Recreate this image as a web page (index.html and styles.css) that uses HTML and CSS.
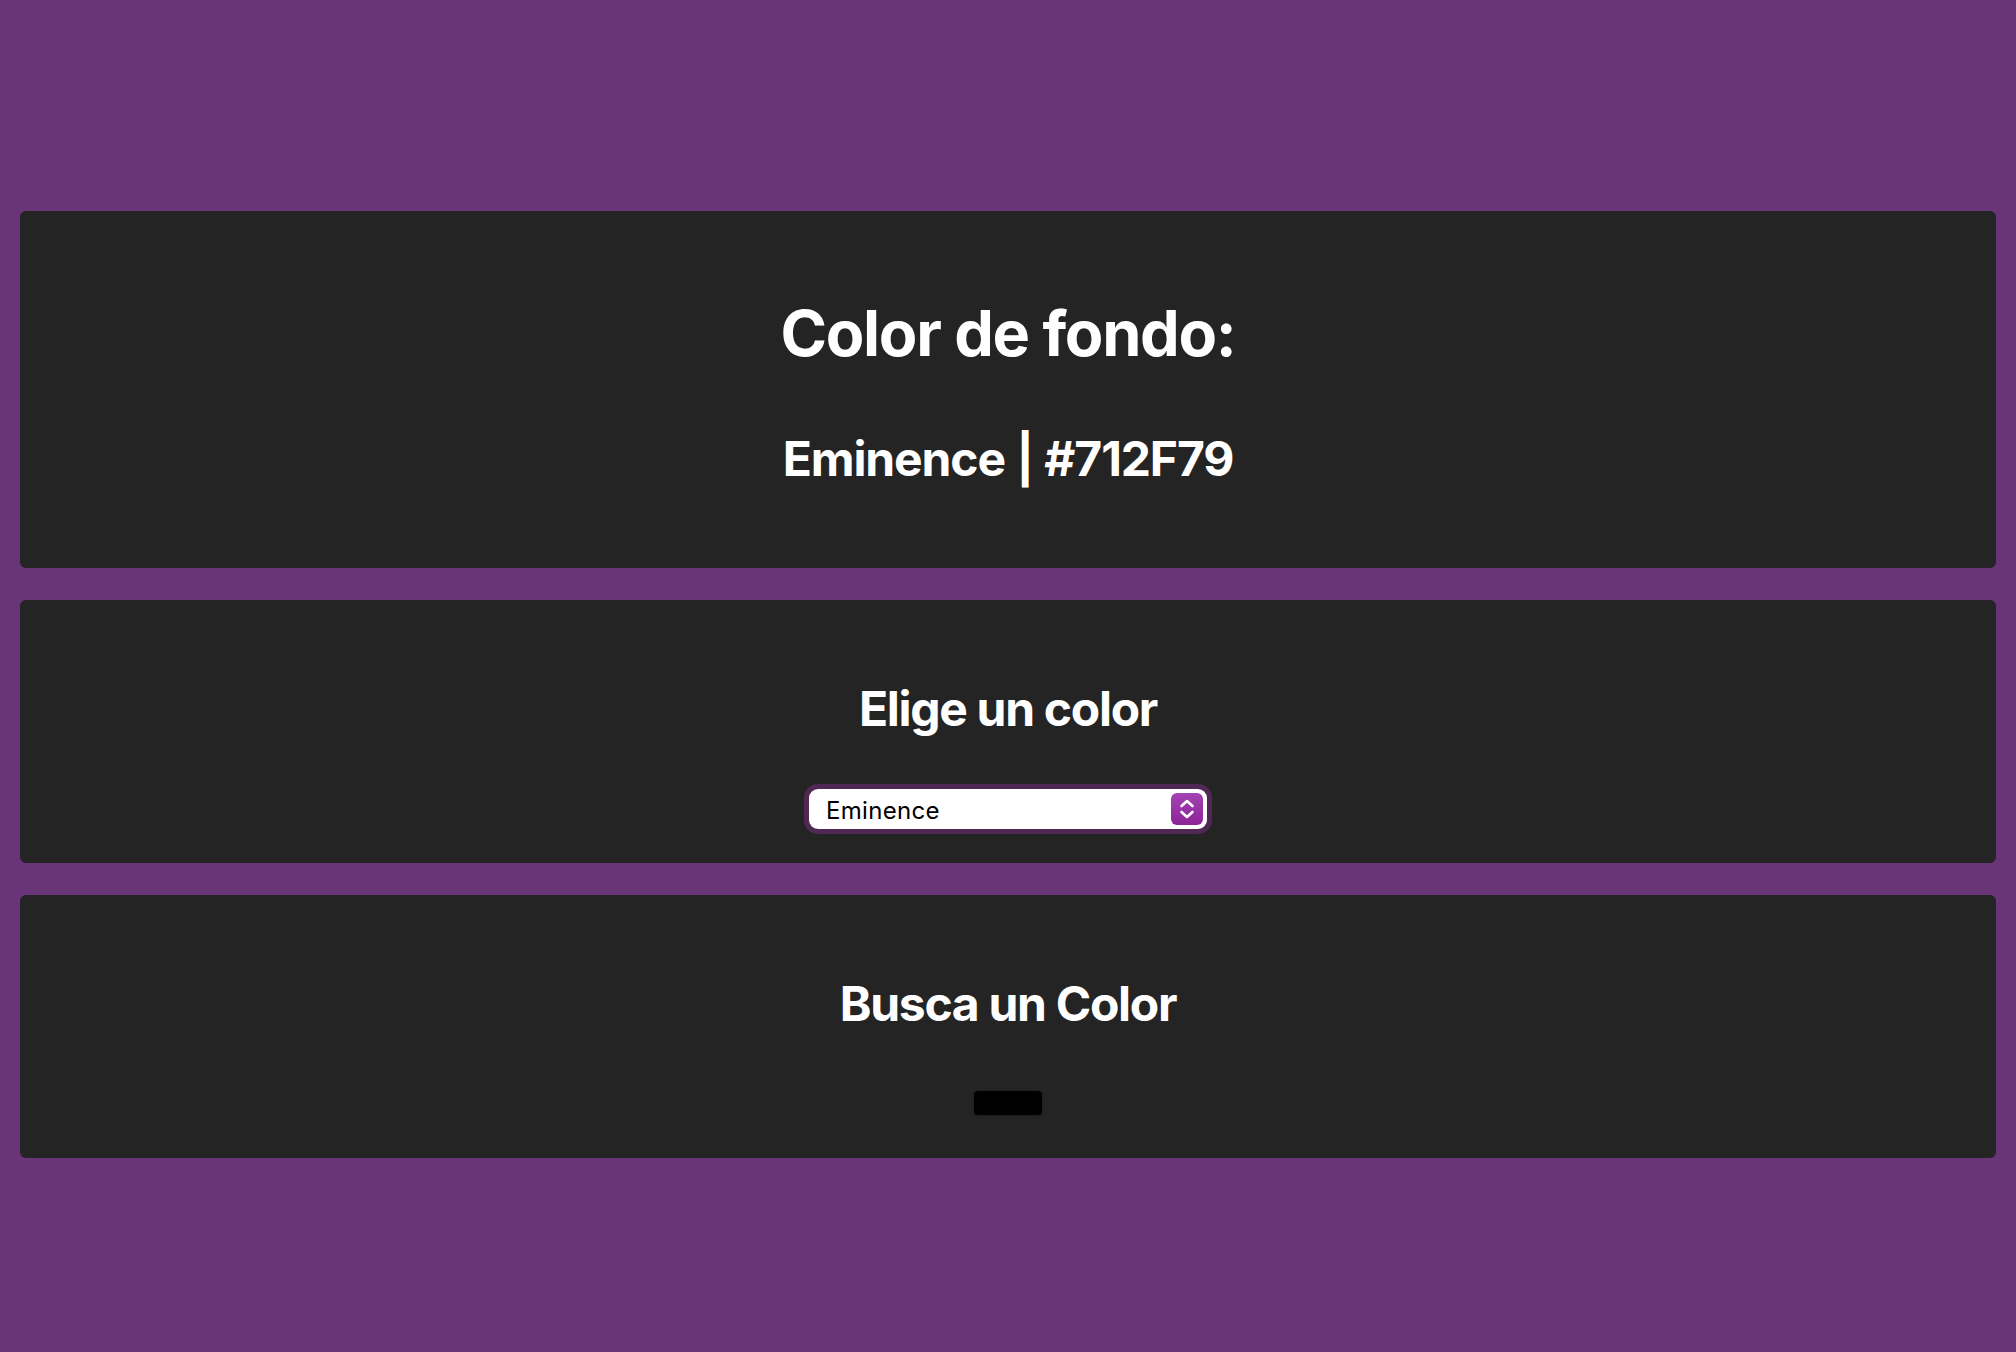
FILE: index.html
```html
<!DOCTYPE html>
<html lang="es">
<head>
<meta charset="utf-8">
<title>Color de fondo</title>
<link rel="stylesheet" href="styles.css">
</head>
<body>
<main class="page">
  <section class="card card-current">
    <h1 class="title">Color de fondo:</h1>
    <h3 class="current">Eminence | #712F79</h3>
  </section>
  <section class="card card-pick">
    <h2 class="subtitle">Elige un color</h2>
    <div class="select" role="combobox" aria-expanded="false">
      <span class="select-value">Eminence</span>
      <span class="select-btn">
        <svg width="32" height="32" viewBox="0 0 32 32" fill="none" stroke="#fff" stroke-width="2.6" stroke-linecap="round" stroke-linejoin="round"><path d="M10.5 13 L16 8 L21.5 13"/><path d="M10.5 19 L16 24 L21.5 19"/></svg>
      </span>
    </div>
  </section>
  <section class="card card-search">
    <h2 class="subtitle subtitle-search">Busca un Color</h2>
    <div class="swatch"></div>
  </section>
</main>
</body>
</html>
```
FILE: styles.css
```css
html, body {
  margin: 0;
  padding: 0;
}
body {
  background: #6a3578;
  font-family: Inter, "Noto Sans", "Liberation Sans", sans-serif;
  color: #fff;
  min-height: 1352px;
}
.page {
  padding: 211px 20px 0;
  display: flex;
  flex-direction: column;
  gap: 32px;
}
.card {
  background: #242424;
  border-radius: 6px;
  display: flex;
  flex-direction: column;
  align-items: center;
  box-sizing: border-box;
}
.card-current {
  height: 357px;
  padding-top: 85px;
}
.card-pick {
  height: 263px;
  padding-top: 80px;
}
.card-search {
  height: 263px;
  padding-top: 80px;
}
.title {
  margin: 0;
  font-size: 63px;
  line-height: 1.2;
  font-weight: 700;
  letter-spacing: -1.3px;
}
.current {
  margin: 58px 0 0;
  font-size: 48px;
  line-height: 1.2;
  font-weight: 700;
  letter-spacing: -1.1px;
  word-spacing: 1px;
}
.subtitle {
  margin: 0;
  font-size: 48px;
  line-height: 1.2;
  font-weight: 700;
  letter-spacing: -1.3px;
}
.select {
  margin-top: 51px;
  width: 398px;
  height: 40px;
  box-sizing: border-box;
  background: #fff;
  border-radius: 9px;
  box-shadow: 0 0 0 5px #4f2854;
  display: flex;
  align-items: center;
  justify-content: space-between;
  padding: 0 4px 0 17px;
}
.select-value {
  color: #000;
  font-size: 24px;
  font-weight: 400;
  letter-spacing: 0.3px;
  padding-top: 4px;
}
.select-btn {
  width: 32px;
  height: 32px;
  border-radius: 6px;
  background: linear-gradient(#a443b4, #8d2397);
  display: flex;
}
.swatch {
  margin-top: 58px;
  width: 68px;
  height: 24px;
  background: #000;
  border-radius: 4px;
  box-shadow: 0 1px 3px rgba(0,0,0,0.3);
}
```
